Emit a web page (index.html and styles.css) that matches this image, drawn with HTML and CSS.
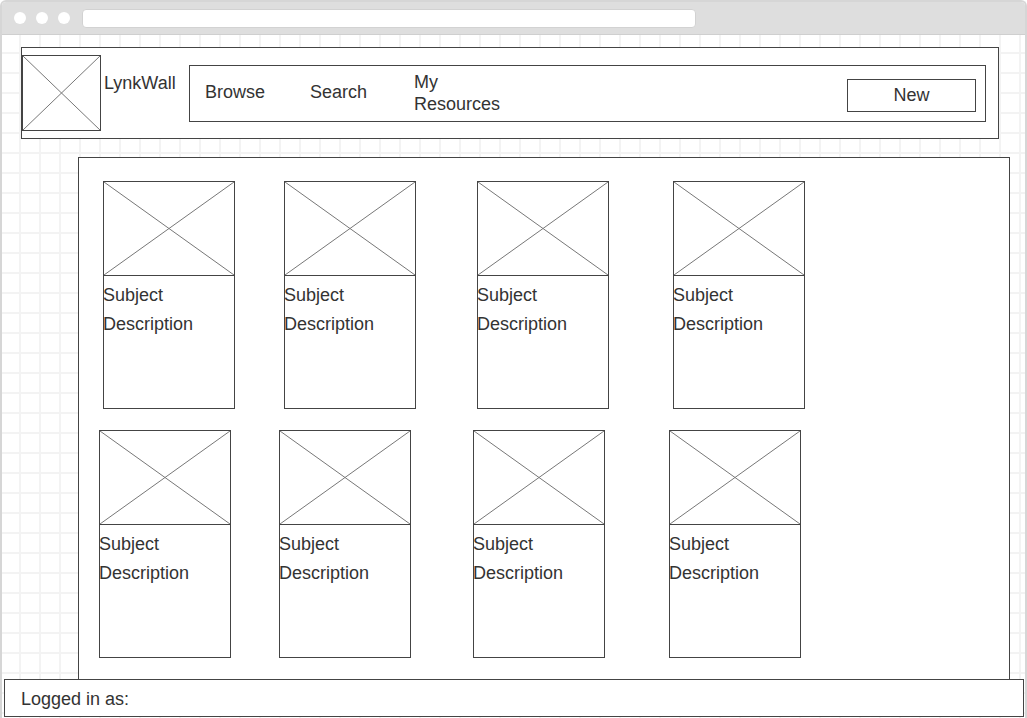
FILE: index.html
```html
<!DOCTYPE html>
<html>
<head>
  <meta charset="UTF-8">
  <title>LynkWall</title>
  <link rel="stylesheet" href="styles.css">
</head>
<body>
  <div class="window">
    <div class="titlebar">
      <span class="dot"></span>
      <span class="dot"></span>
      <span class="dot"></span>
      <div class="url"></div>
    </div>

    <div class="canvas">
      <div class="header">
        <div class="placeholder logo">
          <svg viewBox="0 0 100 100" preserveAspectRatio="none"><line x1="0" y1="0" x2="100" y2="100"/><line x1="100" y1="0" x2="0" y2="100"/></svg>
        </div>
        <div class="brand">LynkWall</div>
        <div class="nav">
          <a class="nav-link">Browse</a>
          <a class="nav-link">Search</a>
          <a class="nav-link two-line">My<br>Resources</a>
          <button class="new-btn">New</button>
        </div>
      </div>

      <div class="main">
        <div class="card-row row-1" id="row1"></div>
        <div class="card-row row-2" id="row2"></div>
      </div>

      <div class="footer">Logged in as:</div>
    </div>
  </div>

  <script>
    function makeCard() {
      const card = document.createElement("div");
      card.classList.add("card");
      card.innerHTML = `
        <div class="placeholder thumb">
          <svg viewBox="0 0 100 100" preserveAspectRatio="none"><line x1="0" y1="0" x2="100" y2="100"/><line x1="100" y1="0" x2="0" y2="100"/></svg>
        </div>
        <div class="card-text subject">Subject</div>
        <div class="card-text">Description</div>`;
      return card;
    }

    ["row1", "row2"].forEach(id => {
      const row = document.getElementById(id);
      for (let i = 0; i < 4; i++) row.appendChild(makeCard());
    });
  </script>
</body>
</html>
```

FILE: styles.css
```css
* {
  box-sizing: border-box;
}

body {
  margin: 0;
  font-family: 'Liberation Sans', Arial, sans-serif;
  color: #333;
  background: #fff;
}

.window {
  width: 1027px;
  height: 718px;
  border: 2px solid #d6d6d6;
  border-bottom: none;
  border-radius: 6px 6px 0 0;
  overflow: hidden;
  display: flex;
  flex-direction: column;
}

.titlebar {
  height: 33px;
  background: #dedede;
  border-bottom: 1px solid #cfcfcf;
  display: flex;
  align-items: center;
  padding-left: 12px;
  gap: 10px;
  flex-shrink: 0;
}

.dot {
  width: 12px;
  height: 12px;
  border-radius: 50%;
  background: #fff;
}

.url {
  margin-left: 2px;
  width: 614px;
  height: 19px;
  background: #fff;
  border-radius: 4px;
  border: 1px solid #d2d2d2;
}

.canvas {
  position: relative;
  flex: 1;
  background-color: #fff;
  background-image:
    linear-gradient(to right, #f3f3f3 2px, transparent 2px),
    linear-gradient(to bottom, #f3f3f3 2px, transparent 2px);
  background-size: 20px 20px;
  background-position: 17px 17px;
  padding: 12px 0 0 19px;
}

.placeholder {
  border: 1px solid #444;
  background: #fff;
}

.placeholder svg {
  display: block;
  width: 100%;
  height: 100%;
}

.placeholder line {
  stroke: #777;
  stroke-width: 1;
  vector-effect: non-scaling-stroke;
}

.header {
  width: 978px;
  height: 92px;
  border: 1px solid #444;
  background: #fff;
  display: flex;
  align-items: flex-start;
  padding: 7px 12px 0 0;
}

.logo {
  width: 79px;
  height: 76px;
}

.brand {
  font-size: 18px;
  margin: 18px 0 0 3px;
  width: 85px;
}

.nav {
  flex: 1;
  height: 57px;
  margin-top: 10px;
  border: 1px solid #444;
  display: flex;
  align-items: center;
  padding: 0 9px 4px 15px;
}

.nav-link {
  font-size: 18px;
  margin-right: 45px;
  line-height: 22px;
}

.nav-link:nth-child(2) {
  margin-right: 46px;
}

.two-line {
  margin-top: 2px;
  margin-left: 1px;
}

.new-btn {
  margin-left: auto;
  width: 129px;
  height: 33px;
  margin-top: 7px;
  border: 1px solid #444;
  background: #fff;
  font-family: inherit;
  font-size: 18px;
  color: #333;
  padding: 1px 0 0 0;
}

.main {
  width: 932px;
  height: 540px;
  margin: 18px 0 0 57px;
  border: 1px solid #444;
  background: #fff;
  padding: 23px 0 0 0;
}

.card-row {
  display: flex;
}

.row-1 {
  padding-left: 24px;
}

.row-2 {
  padding-left: 20px;
  margin-top: 21px;
}

.card {
  width: 132px;
  height: 228px;
  border: 1px solid #444;
  background: #fff;
}

.card:nth-child(2) { margin-left: 49px; }
.card:nth-child(3) { margin-left: 61px; }
.card:nth-child(4) { margin-left: 64px; }

.row-2 .card:nth-child(2) { margin-left: 48px; }
.row-2 .card:nth-child(3) { margin-left: 62px; }
.row-2 .card:nth-child(4) { margin-left: 64px; }

.thumb {
  height: 95px;
  margin: -1px -1px 0 -1px;
}

.card-text {
  font-size: 18px;
  line-height: 29px;
  margin-left: -1px;
}

.subject {
  margin-top: 5px;
}

.footer {
  position: absolute;
  left: 2px;
  bottom: 1px;
  width: 1020px;
  height: 38px;
  border: 1px solid #444;
  background: #fff;
  font-size: 18px;
  padding: 9px 0 0 16px;
}
```
